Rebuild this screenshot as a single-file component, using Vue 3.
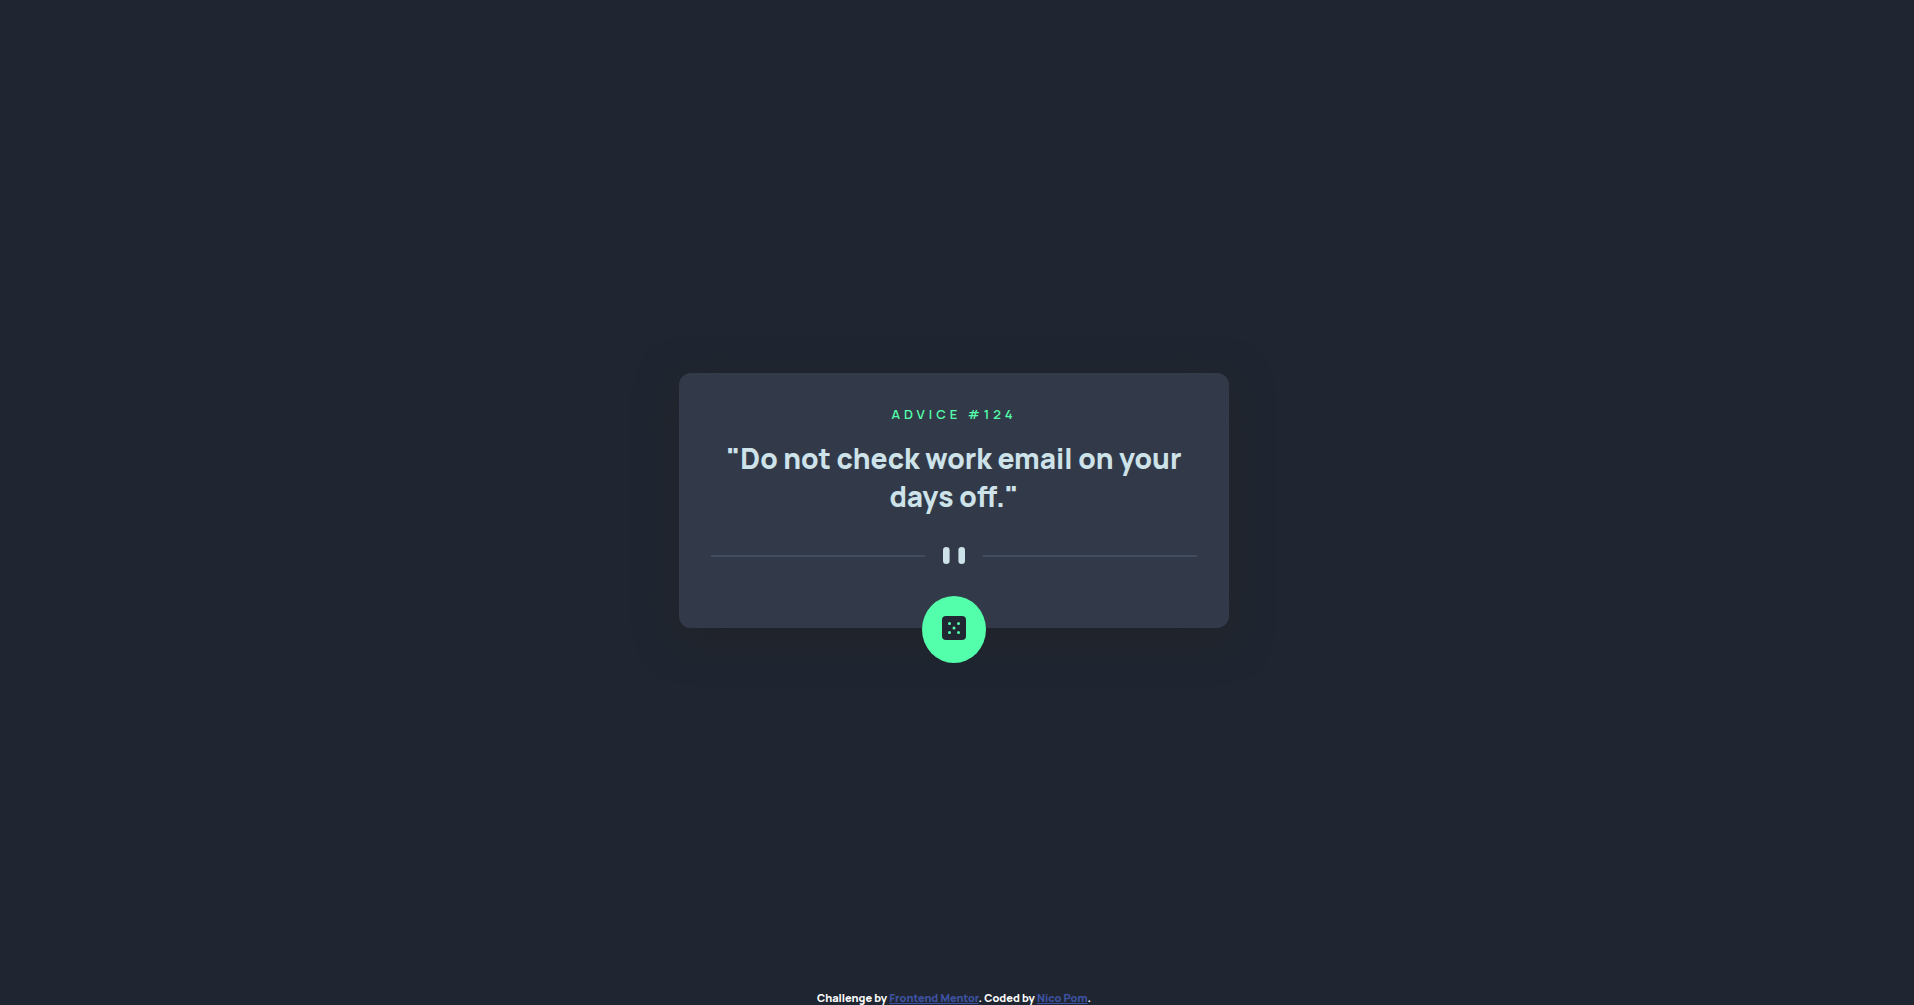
<script setup>
import { ref } from 'vue'

const advices = [
  { id: 124, text: 'Do not check work email on your days off.' },
]
const index = ref(0)

function nextAdvice() {
  index.value = (index.value + 1) % advices.length
}
</script>

<template>
  <div class="page">
    <main class="main">
      <section class="card">
        <h1 class="label">ADVICE #{{ advices[index].id }}</h1>
        <p class="quote">"{{ advices[index].text }}"</p>
        <svg class="divider" viewBox="0 0 486 17" aria-hidden="true">
          <path fill="#414d5f" d="M0 8h214.5v2H0zM271.5 8H486v2H271.5z" />
          <g fill="#cee3e9">
            <rect x="232" width="6.6" height="17" rx="3.3" />
            <rect x="247.4" width="6.6" height="17" rx="3.3" />
          </g>
        </svg>
        <button class="dice" type="button" aria-label="Next advice" @click="nextAdvice">
          <svg width="24" height="24" viewBox="0 0 24 24" aria-hidden="true">
            <rect width="24" height="24" rx="4" fill="#202733" />
            <g fill="#53ffaa">
              <circle cx="7.5" cy="7.5" r="1.5" />
              <circle cx="16.5" cy="7.5" r="1.5" />
              <circle cx="12" cy="12" r="1.5" />
              <circle cx="7.5" cy="16.5" r="1.5" />
              <circle cx="16.5" cy="16.5" r="1.5" />
            </g>
          </svg>
        </button>
      </section>
    </main>
    <footer class="attribution">
      Challenge by <a href="https://www.frontendmentor.io">Frontend Mentor</a>. Coded by
      <a href="#">Nico Pom</a>.
    </footer>
  </div>
</template>

<style>
body {
  background: #1f2631;
}
</style>

<style scoped>
.page {
  display: flex;
  flex-direction: column;
  box-sizing: border-box;
  min-height: 100vh;
  padding-right: 6px;
  font-family: Manrope, Inter, sans-serif;
  font-weight: 800;
}

.main {
  flex: 1;
  display: flex;
  align-items: center;
  justify-content: center;
  padding-top: 11px;
}

.card {
  position: relative;
  box-sizing: border-box;
  width: 100%;
  max-width: 550px;
  padding: 32px 32px 64px;
  border-radius: 12px;
  background: #323a49;
  box-shadow: 0 10px 40px #232328;
  text-align: center;
}

.label {
  margin: 0 0 16px;
  color: #53ffaa;
  font-size: 13px;
  font-weight: 600;
  line-height: 18px;
  letter-spacing: 4px;
}

.quote {
  margin: 0 0 32px;
  color: #cee3e9;
  font-size: 28px;
  line-height: 38px;
}

.divider {
  display: block;
  width: 100%;
}

.dice {
  position: absolute;
  top: 100%;
  left: 50%;
  display: flex;
  justify-content: center;
  width: 64px;
  height: 67px;
  margin: -32px 0 0 -32px;
  padding: 20px;
  border: 0;
  border-radius: 50%;
  background: #53ffaa;
  cursor: pointer;
}

.dice svg {
  flex: none;
}

.attribution {
  color: #ffffff;
  font-size: 11px;
  line-height: 15px;
  text-align: center;
}

.attribution a {
  color: #3e52a3;
}
</style>
